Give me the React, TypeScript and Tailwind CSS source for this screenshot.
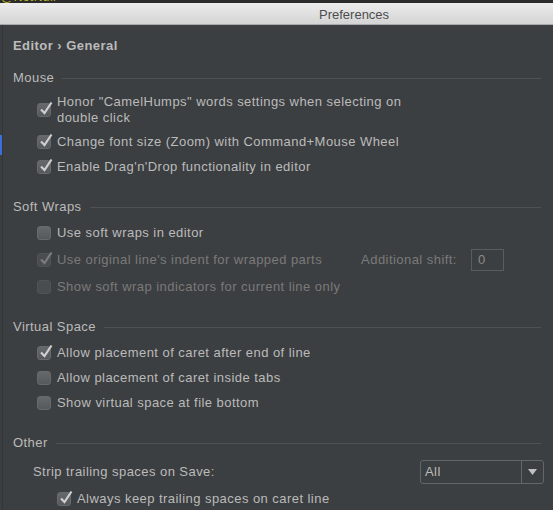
const font = { fontFamily: '"Liberation Sans", Arial, sans-serif' };

function Check({ checked, disabled }: { checked?: boolean; disabled?: boolean }) {
  return (
    <span
      className={
        "relative inline-block w-[14px] h-[14px] shrink-0 rounded-[3px] border " +
        (disabled
          ? "border-[#505355] bg-[#4a4d4f]"
          : "border-[#666a6c] bg-gradient-to-b from-[#65696b] to-[#55595b]")
      }
    >
      {checked && (
        <svg className="absolute left-[1px] top-[-3px]" width="14" height="15" viewBox="0 0 14 15">
          <path
            d="M2 8.5 L5.5 12 L12.5 1.5"
            fill="none"
            stroke={disabled ? "#7a7c7d" : "#cfcfcf"}
            strokeWidth="2.2"
          />
        </svg>
      )}
    </span>
  );
}

function Section({ title }: { title: string }) {
  return (
    <div className="flex items-center h-[26px] pl-[13px] pr-[12px] gap-[8px]">
      <span className="text-[#bbbbbb]">{title}</span>
      <div className="flex-1 h-px bg-[#4f5254]" />
    </div>
  );
}

function Row({
  label,
  checked,
  disabled,
  h,
  children,
}: {
  label: React.ReactNode;
  checked?: boolean;
  disabled?: boolean;
  h: string;
  children?: React.ReactNode;
}) {
  return (
    <div className={"flex items-center pl-[37px] gap-[6px] " + h}>
      <Check checked={checked} disabled={disabled} />
      <span className={disabled ? "text-[#7a7a7a]" : "text-[#bbbbbb]"}>{label}</span>
      {children}
    </div>
  );
}

export default function App() {
  return (
    <div className="w-[553px] h-[510px] overflow-hidden bg-[#3c3f41] text-[13px] leading-[16px] tracking-[0.45px]" style={font}>
      <div className="h-[3px] overflow-hidden bg-[#2b2b2b]">
        <div className="text-[#bbb529] text-[12px] leading-[12px] -mt-[9px] pl-[1px]">@NotNull</div>
      </div>
      <div className="h-[22px] flex items-center pt-[2px] pl-[319px] bg-gradient-to-b from-[#ececec] to-[#d4d4d4] border-b border-[#a9a9a9] text-[#4d4d4d] tracking-normal">
        Preferences
      </div>
      <div className="flex">
        <div className="w-[3px] shrink-0 border-r border-[#333537] flex flex-col">
          <div className="h-[110px]" />
          <div className="h-[20px] bg-[#3d6fd8]" />
        </div>
        <div className="flex-1 -ml-[3px]">
          <div className="h-[40px] flex items-center pt-[1px] pl-[13px] font-bold text-[#bbbbbb]">
            Editor › General
          </div>
          <Section title="Mouse" />
          <Row
            h="h-[38px]"
            checked
            label={
              <>
                Honor "CamelHumps" words settings when selecting on
                <br />
                double click
              </>
            }
          />
          <Row h="h-[25px]" checked label="Change font size (Zoom) with Command+Mouse Wheel" />
          <Row h="h-[25px]" checked label="Enable Drag'n'Drop functionality in editor" />
          <div className="h-[15px]" />
          <Section title="Soft Wraps" />
          <Row h="h-[26px]" label="Use soft wraps in editor" />
          <Row h="h-[27px]" checked disabled label="Use original line's indent for wrapped parts">
            <span className="ml-[33px] text-[#7a7a7a]">Additional shift:</span>
            <span className="ml-[8px] w-[33px] h-[22px] border border-[#5a5d5f] flex items-center pl-[6px] text-[#8a8a8a]">
              0
            </span>
          </Row>
          <Row h="h-[27px]" disabled label="Show soft wrap indicators for current line only" />
          <div className="h-[14px]" />
          <Section title="Virtual Space" />
          <Row h="h-[25px]" checked label="Allow placement of caret after end of line" />
          <Row h="h-[25px]" label="Allow placement of caret inside tabs" />
          <Row h="h-[25px]" label="Show virtual space at file bottom" />
          <div className="h-[15px]" />
          <Section title="Other" />
          <div className="h-[30px] flex items-center pt-[2px] pl-[33px] pr-[9px]">
            <span className="flex-1 text-[#bbbbbb]">Strip trailing spaces on Save:</span>
            <div className="w-[124px] h-[24px] rounded-[3px] border border-[#646769] flex">
              <span className="flex-1 flex items-center pl-[4px] text-[#bbbbbb]">All</span>
              <span className="w-[22px] border-l border-[#646769] flex items-center justify-center">
                <svg width="9" height="6" viewBox="0 0 9 6">
                  <path d="M0 0 H9 L4.5 6 Z" fill="#c0c0c0" />
                </svg>
              </span>
            </div>
          </div>
          <div className="pl-[20px]">
            <Row h="h-[26px]" checked label="Always keep trailing spaces on caret line" />
          </div>
        </div>
      </div>
    </div>
  );
}
